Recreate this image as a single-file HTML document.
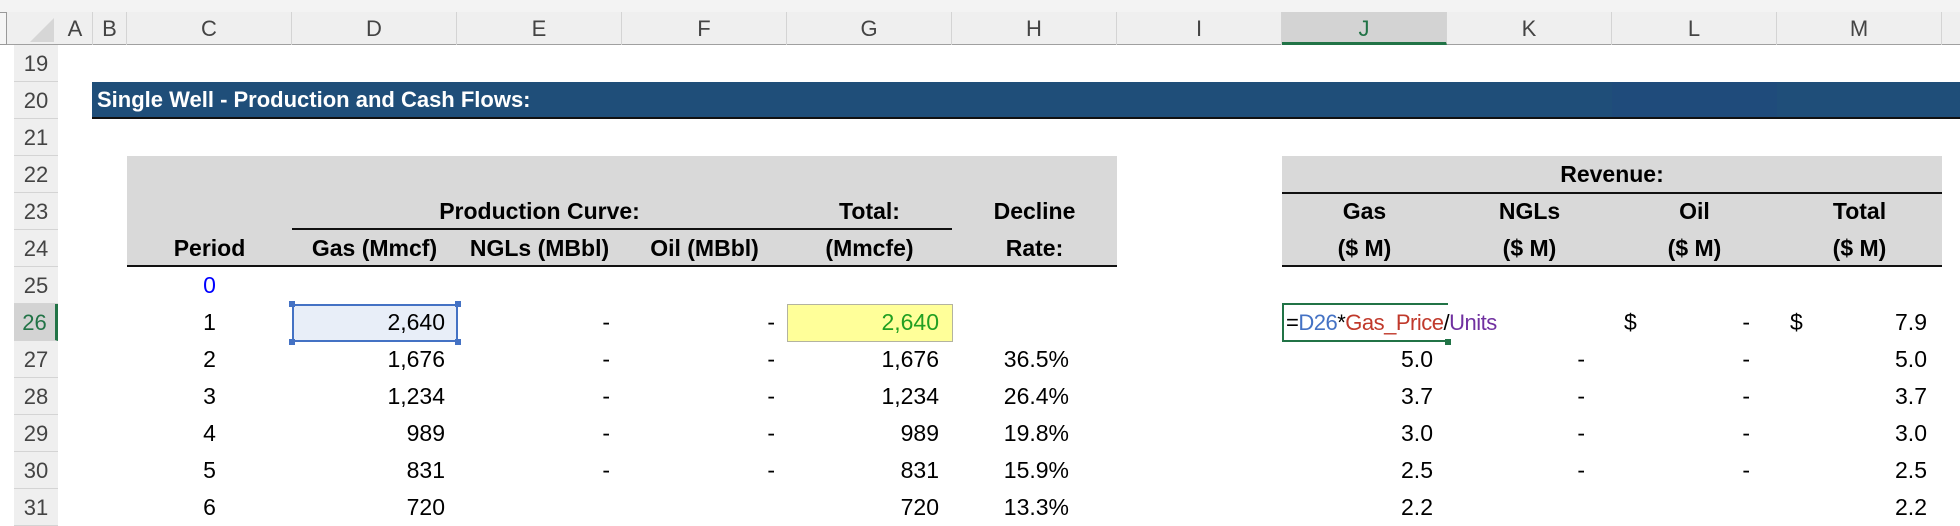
<!DOCTYPE html>
<html><head><meta charset="utf-8"><style>
*{margin:0;padding:0;box-sizing:border-box}
body{width:1960px;height:508px;overflow:hidden;background:#fff;position:relative;font-family:"Liberation Sans",sans-serif;font-size:23px;color:#000}
.a{position:absolute;white-space:nowrap;line-height:37px;height:37px}
.ch{position:absolute;top:12px;height:33px;line-height:33px;text-align:center;color:#444;font-size:22px;border-right:1px solid #d4d4d4}
.rh{position:absolute;left:14px;width:44px;height:37px;line-height:37px;text-align:center;color:#444;font-size:22px;border-bottom:1px solid #d4d4d4;background:#efefef}
.b{font-weight:bold}
.c{text-align:center}.r{text-align:right}
</style></head><body>
<div style="position:absolute;left:0;top:0;width:1960px;height:12px;background:#f3f3f3"></div>
<div style="position:absolute;left:0;top:12px;width:1960px;height:33px;background:#efefef;border-bottom:1px solid #a0a0a0"></div>
<div style="position:absolute;left:0;top:12px;width:7px;height:33px;border:1px solid #999;border-left:none;background:#f5f5f5"></div>
<div style="position:absolute;left:14px;top:45px;width:44px;height:463px;background:#efefef;border-right:1px solid #c8c8c8"></div>
<svg style="position:absolute;left:28px;top:18px" width="28" height="26"><polygon points="26,0 26,24 2,24" fill="#d6d6d6"/></svg>
<div class="ch" style="left:58px;width:35px">A</div>
<div class="ch" style="left:93px;width:34px">B</div>
<div class="ch" style="left:127px;width:165px">C</div>
<div class="ch" style="left:292px;width:165px">D</div>
<div class="ch" style="left:457px;width:165px">E</div>
<div class="ch" style="left:622px;width:165px">F</div>
<div class="ch" style="left:787px;width:165px">G</div>
<div class="ch" style="left:952px;width:165px">H</div>
<div class="ch" style="left:1117px;width:165px">I</div>
<div class="ch" style="left:1282px;width:165px;background:#d3d3d3;color:#217346;border-bottom:3px solid #217346;height:33px">J</div>
<div class="ch" style="left:1447px;width:165px">K</div>
<div class="ch" style="left:1612px;width:165px">L</div>
<div class="ch" style="left:1777px;width:165px">M</div>

<div class="rh" style="top:45px">19</div>
<div class="rh" style="top:82px">20</div>
<div class="rh" style="top:119px">21</div>
<div class="rh" style="top:156px">22</div>
<div class="rh" style="top:193px">23</div>
<div class="rh" style="top:230px">24</div>
<div class="rh" style="top:267px">25</div>
<div class="rh" style="top:304px;background:#d3d3d3;color:#217346;border-right:3px solid #217346">26</div>
<div class="rh" style="top:341px">27</div>
<div class="rh" style="top:378px">28</div>
<div class="rh" style="top:415px">29</div>
<div class="rh" style="top:452px">30</div>
<div class="rh" style="top:489px">31</div>

<div style="position:absolute;left:92px;top:82px;width:1868px;height:37px;background:#1f4e79;border-bottom:2px solid #111"></div>
<div style="position:absolute;left:1612px;top:82px;width:165px;height:35px;background:#1f4b7b"></div>
<div class="a b" style="left:97px;top:81px;color:#fff;font-size:22px">Single Well - Production and Cash Flows:</div>

<div style="position:absolute;left:127px;top:156px;width:990px;height:111px;background:#d9d9d9;border-bottom:2px solid #111"></div>
<div style="position:absolute;left:292px;top:228px;width:660px;height:2px;background:#111"></div>
<div style="position:absolute;left:1282px;top:156px;width:660px;height:111px;background:#d9d9d9;border-bottom:2px solid #111"></div>
<div style="position:absolute;left:1282px;top:192px;width:660px;height:2px;background:#111"></div>

<div class="a b c" style="left:1282px;width:660px;top:156px">Revenue:</div>
<div class="a b c" style="left:292px;width:495px;top:193px">Production Curve:</div>
<div class="a b c" style="left:787px;width:165px;top:193px">Total:</div>
<div class="a b c" style="left:952px;width:165px;top:193px">Decline</div>
<div class="a b c" style="left:1282px;width:165px;top:193px">Gas</div>
<div class="a b c" style="left:1447px;width:165px;top:193px">NGLs</div>
<div class="a b c" style="left:1612px;width:165px;top:193px">Oil</div>
<div class="a b c" style="left:1777px;width:165px;top:193px">Total</div>
<div class="a b c" style="left:127px;width:165px;top:230px">Period</div>
<div class="a b c" style="left:292px;width:165px;top:230px">Gas (Mmcf)</div>
<div class="a b c" style="left:457px;width:165px;top:230px">NGLs (MBbl)</div>
<div class="a b c" style="left:622px;width:165px;top:230px">Oil (MBbl)</div>
<div class="a b c" style="left:787px;width:165px;top:230px">(Mmcfe)</div>
<div class="a b c" style="left:952px;width:165px;top:230px">Rate:</div>
<div class="a b c" style="left:1282px;width:165px;top:230px">($ M)</div>
<div class="a b c" style="left:1447px;width:165px;top:230px">($ M)</div>
<div class="a b c" style="left:1612px;width:165px;top:230px">($ M)</div>
<div class="a b c" style="left:1777px;width:165px;top:230px">($ M)</div>

<div class="a c" style="left:127px;width:165px;top:267px;color:#0000ff">0</div>

<div style="position:absolute;left:292px;top:304px;width:166px;height:38px;background:#e8eef8;border:2px solid #4472c4"></div>
<div style="position:absolute;left:289px;top:301px;width:6px;height:6px;background:#4472c4"></div>
<div style="position:absolute;left:455px;top:301px;width:6px;height:6px;background:#4472c4"></div>
<div style="position:absolute;left:289px;top:339px;width:6px;height:6px;background:#4472c4"></div>
<div style="position:absolute;left:455px;top:339px;width:6px;height:6px;background:#4472c4"></div>
<div style="position:absolute;left:787px;top:304px;width:166px;height:38px;background:#ffff99;border:1px solid #b3b3a0"></div>
<div style="position:absolute;left:1282px;top:303px;width:166px;height:39px;border:2px solid #217346;border-right:none;background:#fff"></div>
<div style="position:absolute;left:1445px;top:339px;width:6px;height:6px;background:#217346"></div>
<div class="a" style="left:1286px;top:304px;font-size:22px;letter-spacing:-0.5px">=<span style="color:#4472c4">D26</span>*<span style="color:#c0392b">Gas_Price</span>/<span style="color:#7030a0">Units</span></div>
<div class="a" style="left:1624px;top:304px">$</div>
<div class="a" style="left:1790px;top:304px">$</div>
<div class="a r" style="left:1700px;width:50px;top:304px">-</div>
<div class="a r" style="left:1827px;width:100px;top:304px">7.9</div>
<div class="a r" style="left:787px;width:152px;top:304px;color:#22a022">2,640</div>

<div id="rows"></div>
<script>
var d=[[1,"2,640",null,null,""],[2,"1,676","1,676","36.5%","5.0","5.0"],[3,"1,234","1,234","26.4%","3.7","3.7"],[4,"989","989","19.8%","3.0","3.0"],[5,"831","831","15.9%","2.5","2.5"],[6,"720","720","13.3%","2.2","2.2"]];
var h="";
function t(x,w,y,s,al){h+='<div class="a" style="left:'+x+'px;width:'+w+'px;top:'+y+'px;text-align:'+al+'">'+s+'</div>';}
d.forEach(function(r,i){var y=304+37*i;
t(127,165,y,r[0],"center");
t(292,153,y,r[1],"right");
if(i<5){t(580,30,y,"-","right");t(745,30,y,"-","right");}
if(i>0){t(787,152,y,r[2],"right");t(952,117,y,r[3],"right");
t(1282,151,y,r[4],"right");
if(i<5){t(1555,30,y,"-","right");t(1720,30,y,"-","right");}
t(1777,150,y,r[5],"right");}
});
document.getElementById("rows").innerHTML=h;
</script>
</body></html>
